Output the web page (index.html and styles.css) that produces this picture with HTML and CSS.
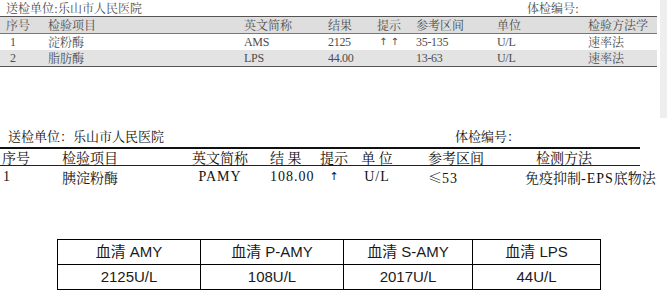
FILE: index.html
```html
<!DOCTYPE html>
<html lang="zh">
<head>
<meta charset="utf-8">
<link rel="stylesheet" href="styles.css">
</head>
<body>
<section class="r1">
  <div class="r1-main">
    <div class="r1-title"><span>送检单位:乐山市人民医院</span><span>体检编号:</span></div>
    <div class="r1-table">
      <div class="r1-row head">
        <span>序号</span><span>检验项目</span><span>英文简称</span><span>结果</span><span>提示</span><span>参考区间</span><span>单位</span><span>检验方法学</span>
      </div>
      <div class="r1-row">
        <span class="lat num">1</span><span>淀粉酶</span><span class="lat">AMS</span><span class="lat">2125</span><span class="arr">↑ ↑</span><span class="lat">35-135</span><span class="lat">U/L</span><span>速率法</span>
      </div>
      <div class="r1-row alt">
        <span class="lat num">2</span><span>脂肪酶</span><span class="lat">LPS</span><span class="lat">44.00</span><span></span><span class="lat">13-63</span><span class="lat">U/L</span><span>速率法</span>
      </div>
    </div>
  </div>
  <div class="r1-strip"></div>
</section>

<section class="r2">
  <div class="r2-title"><span>送检单位：乐山市人民医院</span><span>体检编号：</span></div>
  <div class="r2-table">
    <div class="r2-row head">
      <span class="c1">序号</span><span class="c2">检验项目</span><span class="c3">英文简称</span><span class="c4">结 果</span><span class="c5">提示</span><span class="c6">单 位</span><span class="c7">参考区间</span><span class="c8">检测方法</span>
    </div>
    <div class="r2-row data">
      <span class="c1 lat">1</span><span class="c2">胰淀粉酶</span><span class="c3 lat">PAMY</span><span class="c4 lat">108.00</span><span class="c5">↑</span><span class="c6 lat">U/L</span><span class="c7">≤<span class="lat">53</span></span><span class="c8">免疫抑制<span class="lat">-EPS</span>底物法</span>
    </div>
  </div>
</section>

<section class="r3">
  <table class="sum">
    <tr><td>血清 AMY</td><td>血清 P-AMY</td><td>血清 S-AMY</td><td>血清 LPS</td></tr>
    <tr><td>2125U/L</td><td>108U/L</td><td>2017U/L</td><td>44U/L</td></tr>
  </table>
</section>
</body>
</html>
```

FILE: styles.css
```css
html, body {
  margin: 0;
  padding: 0;
  background: #fff;
}
body {
  width: 667px;
  height: 295px;
  overflow: hidden;
  font-family: "Noto Serif CJK SC", "Liberation Serif", "Noto Sans CJK SC", serif;
}

/* ---------- report 1 ---------- */
.r1 {
  display: flex;
  height: 118px;
  color: #4d4d4d;
  font-size: 12px;
}
.r1-main {
  width: 657px;
}
.r1-strip {
  flex: 1;
  margin-left: 3px;
  background: #eeeeee;
}
.r1-title {
  display: grid;
  grid-template-columns: 521px 1fr;
  padding-left: 6px;
  height: 16px;
  line-height: 15px;
}
.r1-table {
  border-top: 1px solid #555;
  border-bottom: 1px solid #555;
}
.r1-row {
  display: grid;
  grid-template-columns: 42px 196px 84px 49px 39px 81px 91px 1fr;
  padding-left: 6px;
  height: 16px;
  line-height: 16px;
  white-space: nowrap;
}
.r1-row.head {
  background: #dedede;
  border-bottom: 1px solid #777;
}
.r1-row.alt {
  background: #e3e3e3;
}
.r1 .lat {
  font-family: "Liberation Serif", serif;
  letter-spacing: -0.3px;
}
.r1 .num {
  padding-left: 4px;
}
.r1 .arr {
  font-family: "DejaVu Sans", sans-serif;
  font-size: 10px;
  padding-left: 2px;
}

/* ---------- report 2 ---------- */
.r2 {
  margin-top: 9px;
  width: 640px;
  color: #111;
  font-size: 14px;
}
.r2-title {
  display: grid;
  grid-template-columns: 447px 1fr;
  padding-left: 8px;
  height: 20px;
  line-height: 18px;
  font-size: 13px;
}
.r2-table {
  border-top: 2px solid #111;
}
.r2-row {
  display: grid;
  grid-template-columns: 60px 128px 64px 66px 32px 54px 116px 1fr;
  white-space: nowrap;
}
.r2-row.head {
  height: 16px;
  line-height: 16px;
  border-bottom: 1px solid #222;
}
.r2-row.data {
  height: 20px;
  line-height: 22px;
}
.r2 .lat {
  font-family: "Liberation Serif", serif;
  letter-spacing: 1px;
}
.r2 .c1 { padding-left: 2px; }
.r2 .c2 { padding-left: 2px; }
.r2 .c3 { text-align: center; }
.r2 .c4 { padding-left: 18px; }
.r2 .c5 { text-align: center; }
.r2 .c6 { text-align: center; }
.r2 .c7 { padding-left: 24px; }
.r2 .head .c8 { padding-left: 16px; }
.r2 .data .c8 { padding-left: 5px; }
.r2 .data .c1 { padding-left: 3px; }
.r2 .data .c5 { font-family: "DejaVu Sans", sans-serif; font-size: 11px; }

/* ---------- summary table ---------- */
.r3 {
  margin-top: 53px;
  padding-left: 57px;
}
.sum {
  border-collapse: collapse;
  font-family: "Liberation Sans", "Noto Sans CJK SC", sans-serif;
  font-size: 15px;
  color: #1a1a1a;
}
.sum td {
  border: 1px solid #000;
  height: 24px;
  padding: 0;
  text-align: center;
  line-height: 24px;
}
.sum td:nth-child(1) { width: 142px; }
.sum td:nth-child(2) { width: 142px; }
.sum td:nth-child(3) { width: 128px; }
.sum td:nth-child(4) { width: 127px; }
```
